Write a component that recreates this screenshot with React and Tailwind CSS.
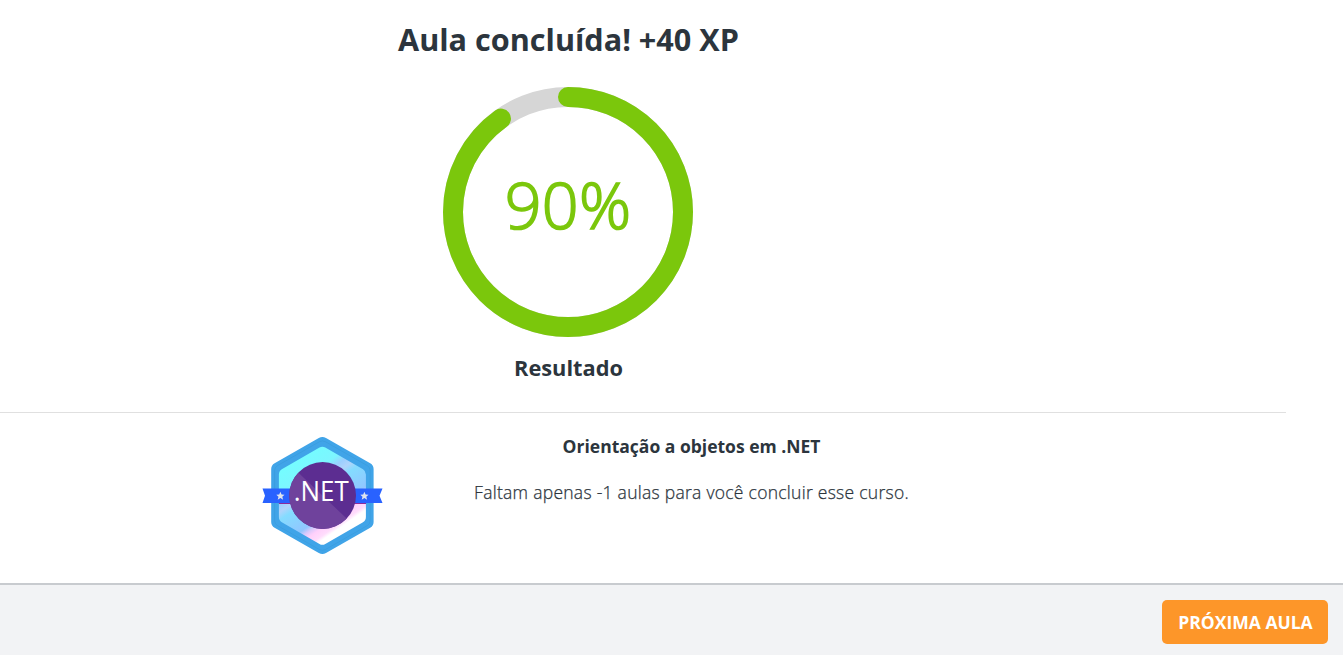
import React from "react";

function ProgressRing({ value }) {
  const radius = 115;
  const length = 2 * Math.PI * radius;
  return (
    <div className="grid h-[250px] w-[250px] place-items-center">
      <svg viewBox="0 0 250 250" className="col-start-1 row-start-1 h-[250px] w-[250px] -rotate-90" fill="none" strokeWidth="20">
        <circle cx="125" cy="125" r={radius} stroke="#d6d6d6" />
        <circle
          cx="125"
          cy="125"
          r={radius}
          stroke="#7bc70c"
          strokeLinecap="round"
          strokeDasharray={`${(length * value) / 100} ${length}`}
        />
      </svg>
      <span className="col-start-1 row-start-1 pb-[16px] text-[64.5px] leading-none font-light tracking-[0.3px] text-[#7bc70c] [-webkit-text-stroke:1.7px_#7bc70c]">{value}%</span>
    </div>
  );
}

function Star({ x, y }) {
  return (
    <path
      transform={`translate(${x} ${y})`}
      d="M0-4.3 1.2-1.4 4.1-1.3 1.9.7 2.7 3.7 0 2.1-2.7 3.7-1.9.7-4.1-1.3-1.2-1.4Z"
      fill="#dfe3ee"
    />
  );
}

function CourseBadge() {
  return (
    <svg viewBox="0 0 140 140" className="h-[140px] w-[140px]" role="img" aria-label=".NET">
      <defs>
        <linearGradient id="holo" gradientUnits="userSpaceOnUse" x1="45" y1="30" x2="98" y2="106">
          <stop offset="0" stopColor="#73feff" />
          <stop offset=".25" stopColor="#7df5ff" />
          <stop offset=".33" stopColor="#9ccfff" />
          <stop offset=".4" stopColor="#b0d4fb" />
          <stop offset=".47" stopColor="#84dcff" />
          <stop offset=".7" stopColor="#91c6ff" />
          <stop offset=".75" stopColor="#d9c9fb" />
          <stop offset=".8" stopColor="#ffd0fb" />
          <stop offset=".87" stopColor="#ffdcfc" />
          <stop offset=".91" stopColor="#ffffff" />
        </linearGradient>
        <clipPath id="disc">
          <circle cx="70.6" cy="70.5" r="33.4" />
        </clipPath>
      </defs>
      <path
        d="M66.8 13.1Q70.4 10.9 74 13.1L118.2 38.2Q121.6 40.2 121.6 44V97Q121.6 100.8 118.2 102.8L74 127.9Q70.4 130.1 66.8 127.9L22.6 102.8Q19.2 100.8 19.2 97V44Q19.2 40.2 22.6 38.2Z"
        fill="#40a4e8"
      />
      <path
        d="M67.5 22.6Q70.4 20.9 73.3 22.6L111 44.2Q113.9 46 113.9 49.5V92Q113.9 95.5 111 97.2L73.3 119Q70.4 120.7 67.5 119L29.8 97.2Q26.9 95.5 26.9 92V49.5Q26.9 46 29.8 44.2Z"
        fill="url(#holo)"
      />
      <path
        d="M67.3 16.8Q70.4 15 73.5 16.8L115.3 40.6Q118.2 42.3 118.2 45.6V95.6Q118.2 99 115.3 100.6L73.5 124.5Q70.4 126.2 67.3 124.5L25.5 100.6Q22.6 99 22.6 95.6V45.6Q22.6 42.3 25.5 40.6Z"
        fill="none"
        stroke="#3798d9"
        strokeWidth=".5"
      />
      <path d="M26.9 78.5H114" stroke="#8b2b9b" strokeWidth="1" />
      <path d="M10.5 63.5H40V78H10.5L13 70.7ZM130.5 63.5H100V78H130.5L127.5 70.7Z" fill="#2962ff" />
      <Star x={28.4} y={71} />
      <Star x={112.4} y={71} />
      <g clipPath="url(#disc)">
        <path d="M30 30H110V110H30Z" fill="#5c2d91" />
        <path d="M30 32 112 110H30Z" fill="#6f429c" />
      </g>
      <text x="69.2" y="75.8" textAnchor="middle" textLength="55" lengthAdjust="spacingAndGlyphs" fontSize="27" fill="#ffffff">
        .NET
      </text>
    </svg>
  );
}

export default function App() {
  return (
    <div className="flex h-[655px] flex-col overflow-hidden bg-white font-['Open_Sans',sans-serif] text-[#2c353d]">
      <main className="flex h-[583px] flex-col">
        <section className="flex h-[412px] w-[1137px] flex-col items-center pt-[17px]">
          <h1 className="text-[30.6px] leading-[44px] font-bold">Aula concluída! +40 XP</h1>
          <div className="mt-[26px] mr-px">
            <ProgressRing value={90} />
          </div>
          <h2 className="mt-[16px] text-[21.8px] leading-[30px] font-bold">Resultado</h2>
        </section>
        <section className="flex w-[1286px] border-t border-[#e0e0e0] pt-[12px] pl-[252px]">
          <CourseBadge />
          <div className="ml-[42px] flex w-[515px] flex-col items-center pt-[8px]">
            <h3 className="text-[17.5px] leading-[26px] font-bold">Orientação a objetos em .NET</h3>
            <p className="mt-[20px] text-[17.5px] leading-[26px] font-light tracking-[0.27px] [-webkit-text-stroke:0.25px_#2c353d]">Faltam apenas -1 aulas para você concluir esse curso.</p>
          </div>
        </section>
      </main>
      <footer className="flex h-[72px] justify-end border-t-2 border-[#c8cbcf] bg-[#f2f3f5] pt-[15px] pr-[15px]">
        <button className="h-[44px] w-[166px] rounded-[5px] bg-[#fd9629] pl-px text-[17.5px] font-bold text-white">PRÓXIMA AULA</button>
      </footer>
    </div>
  );
}
